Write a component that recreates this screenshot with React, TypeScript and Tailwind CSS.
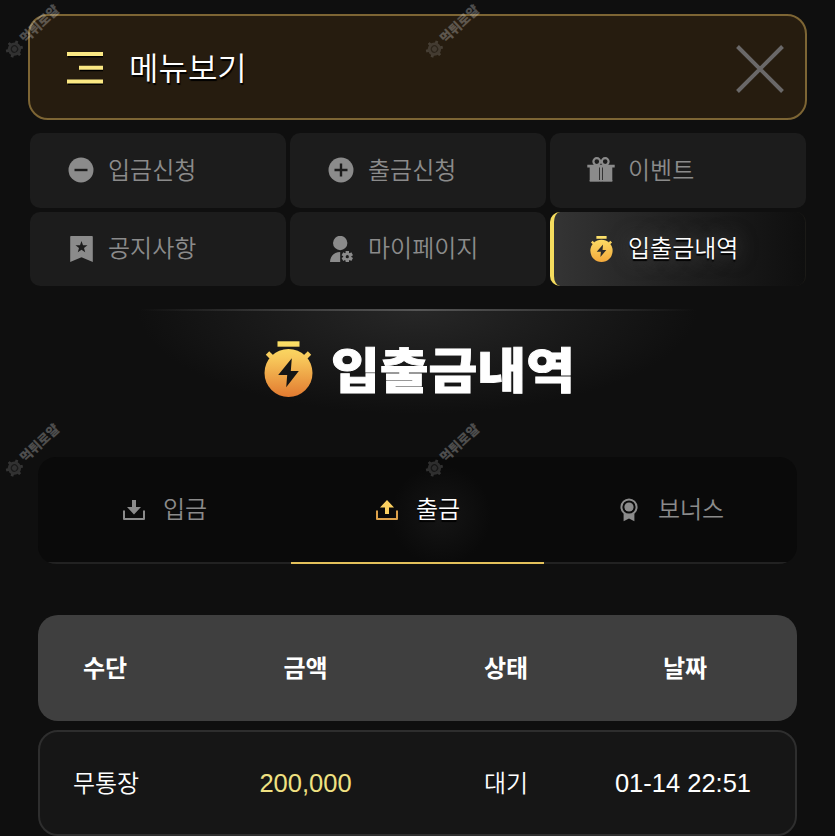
import React from 'react';

interface IconProps {
  className?: string;
}

const StopwatchIcon: React.FC<IconProps & { id: string; bolt: string }> = ({ className, id, bolt }) => (
  <svg viewBox="0 0 49 56" className={className}>
    <defs>
      <linearGradient id={id} x1="0" y1="0" x2="0" y2="56" gradientUnits="userSpaceOnUse">
        <stop offset="0" stopColor="#fbe267" />
        <stop offset="0.3" stopColor="#f8c95b" />
        <stop offset="1" stopColor="#e27a30" />
      </linearGradient>
    </defs>
    <g fill={`url(#${id})`}>
      <path d="M13.5 0.3H35.5V5.7H13.5Z" />
      <path d="M1.8 13.7L5.2 10.3L11 16L7.5 19.5Z" />
      <path d="M47.2 13.7L43.8 10.3L38 16L41.5 19.5Z" />
      <circle cx="24.5" cy="32" r="24" />
    </g>
    <path fill={bolt} d="M27.8 17.3L14.2 34H23.2L22.2 46.3L34.8 30H26.8Z" />
  </svg>
);

// Menu size has a lighter gradient than the title one
const MenuWatchIcon = () => (
  <svg viewBox="0 0 49 56" className="w-[23px] h-[26px]">
    <defs>
      <linearGradient id="menu-watch" x1="0" y1="0" x2="0" y2="56" gradientUnits="userSpaceOnUse">
        <stop offset="0" stopColor="#fde36c" />
        <stop offset="1" stopColor="#f3a93c" />
      </linearGradient>
    </defs>
    <g fill="url(#menu-watch)">
      <path d="M13.5 0H35.5V6H13.5Z" />
      <path d="M1.8 14L5.5 10L11 16L7.5 19.5Z" />
      <path d="M47.2 14L43.5 10L38 16L41.5 19.5Z" />
      <circle cx="24.5" cy="32" r="24" />
    </g>
    <path fill="#2b2b2b" d="M27.8 18.3L14.2 34H23.2L22.2 45.3L34.8 30H26.8Z" />
  </svg>
);

const MinusIcon = () => (
  <svg viewBox="0 0 26 26" className="w-[26px] h-[26px]">
    <circle cx="13" cy="13" r="12.5" fill="#8b8b8b" />
    <path d="M6.5 13H19.5" stroke="#1c1c1c" strokeWidth="2.4" />
  </svg>
);

const PlusIcon = () => (
  <svg viewBox="0 0 26 26" className="w-[26px] h-[26px]">
    <circle cx="13" cy="13" r="12.5" fill="#8b8b8b" />
    <path d="M6.5 13H19.5M13 6.5V19.5" stroke="#1c1c1c" strokeWidth="2.4" />
  </svg>
);

const GiftIcon = () => (
  <svg viewBox="0 0 28 26" className="w-7 h-[26px]">
    <g fill="none" stroke="#8b8b8b" strokeWidth="2.2">
      <circle cx="9.8" cy="4.6" r="3.4" />
      <circle cx="18.2" cy="4.6" r="3.4" />
    </g>
    <path fill="#8b8b8b" d="M0.3 7.8H27.7V10.4H25.3V24.2H15.8V10.4H15V24.2H13V10.4H12.2V24.2H2.7V10.4H0.3Z" />
    <path fill="#8b8b8b" d="M2.7 23H25.3V24.6H2.7Z" />
  </svg>
);

const BookmarkIcon = () => (
  <svg viewBox="0 0 23 26" className="w-[23px] h-[26px]">
    <path fill="#8b8b8b" d="M1 0H22a.8.8 0 0 1 .8.8V26L11.5 21.2L.2 26V.8A.8.8 0 0 1 1 0Z" />
    <path fill="#1c1c1c" d="M11.5 5L13 9.2L17.5 9.3L14 12L15.2 16.3L11.5 13.8L7.8 16.3L9 12L5.5 9.3L10 9.2Z" />
  </svg>
);

const UserGearIcon = () => (
  <svg viewBox="0 0 23 26" className="w-[23px] h-[26px]">
    <circle cx="10.2" cy="7" r="7.2" fill="#8b8b8b" />
    <path fill="#8b8b8b" d="M0 26C0 20.5 4.2 16 10.2 16V26Z" />
    <g stroke="#8b8b8b" strokeWidth="3.4">
      <path d="M17.3 15V26.4M12.4 17.8L22.2 23.5M12.4 23.5L22.2 17.8" />
    </g>
    <circle cx="17.3" cy="20.7" r="4" fill="#8b8b8b" />
    <circle cx="17.3" cy="20.7" r="1.6" fill="#1c1c1c" />
  </svg>
);

const DownloadIcon = () => (
  <svg viewBox="0 0 22 20" className="w-[22px] h-5">
    <path fill="none" stroke="#8b8b8b" strokeWidth="2" strokeLinejoin="round" d="M1 10.5V19H21V10.5" />
    <path fill="#8b8b8b" d="M9 0H13V7H18L11 14.5L4 7H9Z" />
  </svg>
);

const UploadIcon = () => (
  <svg viewBox="0 0 22 20" className="w-[22px] h-5">
    <path fill="none" stroke="#dea24b" strokeWidth="2" strokeLinejoin="round" d="M1 10.5V19H21V10.5" />
    <path fill="#fbd060" d="M11 0L18 7.5H13V14H9V7.5H4Z" />
  </svg>
);

const MedalIcon = () => (
  <svg viewBox="0 0 22 24" className="w-[22px] h-6">
    <circle cx="11" cy="9" r="7.6" fill="none" stroke="#8b8b8b" strokeWidth="2" />
    <circle cx="11" cy="9" r="4.6" fill="#8b8b8b" />
    <path fill="#8b8b8b" d="M5.6 15Q11 18.6 16.4 15V23.2L11 20.6L5.6 23.2Z" />
  </svg>
);

const Watermark: React.FC<IconProps> = ({ className }) => (
  <div className={`absolute w-[66px] h-4 flex items-center gap-[3px] -rotate-[43deg] opacity-30 pointer-events-none ${className}`}>
    <svg viewBox="0 0 16 16" className="w-[17px] h-[17px] shrink-0 opacity-70">
      <g stroke="#c0c0c0" strokeWidth="2.6">
        <path d="M8 0V16M1 4L15 12M1 12L15 4" />
      </g>
      <circle cx="8" cy="8" r="6.3" fill="#b0b0b0" />
      <circle cx="8" cy="8" r="3" fill="none" stroke="#444" strokeWidth="1.2" />
    </svg>
    <span className="text-[13px] leading-4 font-black text-[#e0e0e0] whitespace-nowrap">먹튀로얄</span>
  </div>
);

const menuItems = [
  { label: '입금신청', icon: <MinusIcon /> },
  { label: '출금신청', icon: <PlusIcon /> },
  { label: '이벤트', icon: <GiftIcon /> },
  { label: '공지사항', icon: <BookmarkIcon /> },
  { label: '마이페이지', icon: <UserGearIcon /> },
  { label: '입출금내역', icon: <MenuWatchIcon />, active: true },
];

const tabs = [
  { label: '입금', icon: <DownloadIcon /> },
  { label: '출금', icon: <UploadIcon />, active: true },
  { label: '보너스', icon: <MedalIcon /> },
];

const App: React.FC = () => {
  return (
    <div className="relative w-[835px] h-[836px] overflow-hidden bg-[#0f0f0f] pt-3.5 text-white font-['Liberation_Sans','Noto_Sans_CJK_KR',sans-serif]">
      {/* Header */}
      <header className="ml-7 w-[779px] h-[106px] flex items-center justify-between rounded-[20px] border-2 border-[#7d6534] bg-[#261c0f] pt-1 pl-[37px] pr-[21px]">
        <div className="flex items-center">
          <svg viewBox="0 0 36 34" className="w-9 h-[34px]">
            <path stroke="#000" strokeWidth="4" d="M1 3.5H36M13 17.3H36M1 31H36" />
            <path stroke="#fbe883" strokeWidth="4" d="M0 2H36M12 15.7H36M0 29.4H36" />
          </svg>
          <span className="ml-[26px] text-[32px] leading-10 font-[350] [text-shadow:1px_2px_1px_#000]">메뉴보기</span>
        </div>
        <svg viewBox="0 0 48 48" className="w-12 h-12">
          <path stroke="#6a6868" strokeWidth="4" d="M1.5 1.5L46.5 46.5M46.5 1.5L1.5 46.5" />
        </svg>
      </header>

      {/* Menu */}
      <nav className="mt-[13px] ml-[29.5px] w-[776px] grid grid-cols-3 gap-1">
        {menuItems.map(item => (
          <div
            key={item.label}
            className={`h-[74.5px] flex items-center rounded-[10px] ${
              item.active
                ? 'border-l-4 border-r border-l-[#f5dc5e] border-r-[#1b1a17] bg-linear-to-r from-[#343434] via-[#202020] to-[#0f0f0f] pl-[33.5px] text-white [text-shadow:0_2px_1px_#000,0_0_20px_#555]'
                : 'bg-[#1c1c1c] pl-[37.5px] text-[#8b8b8b]'
            }`}
          >
            <span className="w-7 flex justify-center">{item.icon}</span>
            <span className="ml-[13px] pt-px text-2xl font-[350]">{item.label}</span>
          </div>
        ))}
      </nav>

      {/* Title */}
      <section className="mt-[23px] h-[148px] bg-[radial-gradient(ellipse_280px_105px_at_50%_0,#272727,#0f0f0f)]">
        <div className="h-0.5 mx-[140px] bg-linear-to-r from-transparent via-[#555] to-transparent" />
        <div className="pt-[30px] pl-1 flex items-start justify-center gap-[18px]">
          <StopwatchIcon id="title-watch" bolt="#151515" className="w-[49px] h-14" />
          <h1 className="pt-[3px] text-[53px] leading-[56px] font-black scale-y-90 [-webkit-text-stroke:1px_#fff]">입출금내역</h1>
        </div>
      </section>

      {/* Tabs */}
      <div className="ml-[38px] w-[759px] h-[107px] grid grid-cols-3 rounded-[18px] bg-[#0a0a0a] overflow-hidden">
        {tabs.map(tab => (
          <div
            key={tab.label}
            className={`flex items-center justify-center gap-[18px] pl-px border-b-2 ${
              tab.active
                ? 'border-[#e3c15b] text-white bg-[radial-gradient(circle_50px_at_150px_58px,#151515,#0a0a0a)] [text-shadow:0_2px_1px_#000]'
                : 'border-[#222] text-[#8b8b8b]'
            }`}
          >
            {tab.icon}
            <span className="pt-px text-2xl font-[350]">{tab.label}</span>
          </div>
        ))}
      </div>

      {/* History */}
      <div className="mt-[51px] ml-[38px] w-[759px] text-center text-2xl">
        <div className="h-[106px] grid grid-cols-[134px_267px_134px_224px] items-center rounded-[20px] bg-[#3f3f3f] pt-px font-bold">
          <span>수단</span>
          <span>금액</span>
          <span>상태</span>
          <span>날짜</span>
        </div>
        <div className="mt-[9px] h-[106px] grid grid-cols-[132px_267px_134px_222px] items-center rounded-[20px] border-2 border-[#2e2e2e] bg-[#161616] pt-px">
          <span className="font-[350]">무통장</span>
          <span className="text-[25.5px] text-[#f0e182]">200,000</span>
          <span className="font-[350]">대기</span>
          <span className="text-[25.5px] -ml-0.5">01-14 22:51</span>
        </div>
      </div>

      <Watermark className="-left-px top-[24px]" />
      <Watermark className="left-[419px] top-[24px]" />
      <Watermark className="-left-px top-[443px]" />
      <Watermark className="left-[419px] top-[443px]" />
    </div>
  );
};

export default App;
